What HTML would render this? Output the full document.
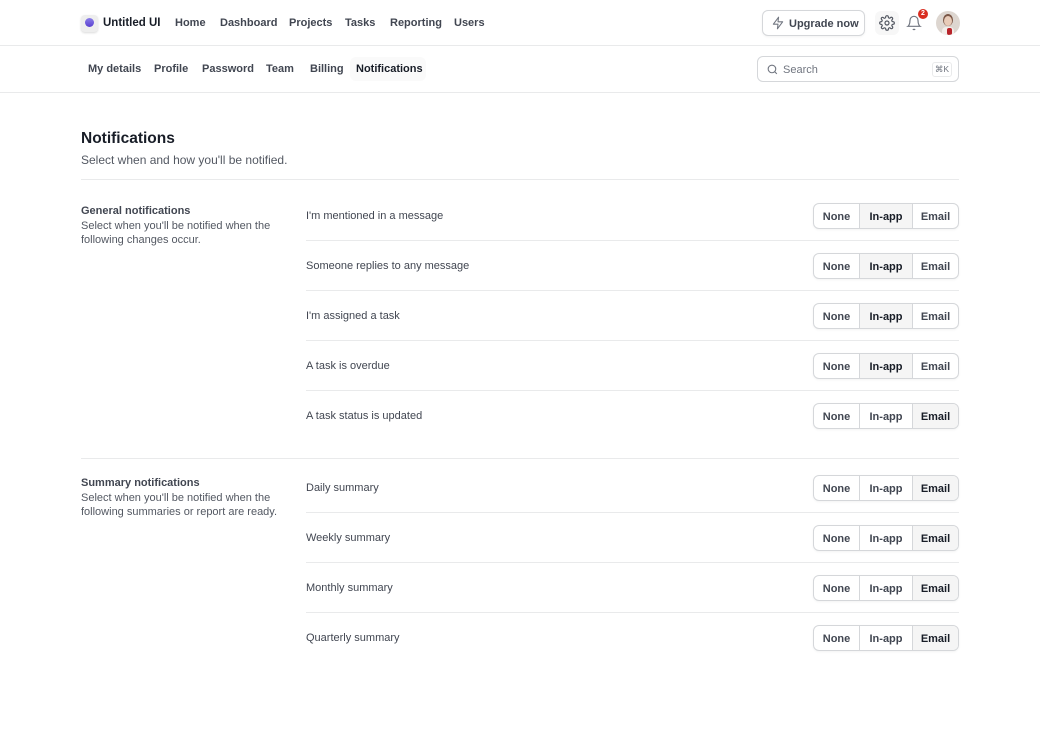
<!DOCTYPE html>
<html><head><meta charset="utf-8"><style>
*{box-sizing:border-box;margin:0;padding:0}
body{width:1040px;height:732px;background:#fff;font-family:"Liberation Sans",sans-serif;color:#181d27;position:relative;overflow:hidden}
.abs{position:absolute}
.hdr{left:0;top:0;width:1040px;height:46px;border-bottom:1px solid #e9eaeb}
.nav a{position:absolute;top:17px;font-size:11px;font-weight:600;color:#414651;text-decoration:none}
.sub{top:46px;left:0;width:1040px;height:47px;border-bottom:1px solid #e9eaeb}
.tab{position:absolute;top:17px;font-size:11px;font-weight:600;color:#414651}
.row{position:absolute;left:306px;width:653px;height:50px;border-bottom:1px solid #e9eaeb}
.row span{position:absolute;left:0;top:19px;font-size:11px;color:#414651}
.grp{position:absolute;right:0;top:12px;width:146px;height:26px;border:1px solid #d5d7da;border-radius:6px;display:flex;overflow:hidden;box-shadow:0 1px 2px rgba(10,13,18,.05)}
.grp div{font-size:11px;font-weight:600;color:#414651;display:flex;align-items:center;justify-content:center;height:100%;padding-top:1px}
.grp .n{width:46px;border-right:1px solid #d5d7da}
.grp .i{width:53px;border-right:1px solid #d5d7da}
.grp .e{flex:1}
.grp .on{background:#f5f5f5;color:#181d27}
.sec{position:absolute;left:81px;font-size:11px;color:#535862;line-height:14.5px}
.sec b{color:#414651;font-weight:600;display:block}
</style></head><body>
<div class="abs hdr">
 <div class="abs" style="left:81px;top:15px;width:17px;height:17px;border-radius:4px;background:#eee;box-shadow:0 1px 2px rgba(0,0,0,.15)"><div style="position:absolute;left:4px;top:3px;width:9px;height:9px;border-radius:50%;background:linear-gradient(#8b7ee8,#5a40d0)"></div></div>
 <div class="abs" style="left:103px;top:17px;font-size:11.5px;font-weight:700">Untitled UI</div>
 <div class="nav"><a style="left:175px">Home</a><a style="left:220px">Dashboard</a><a style="left:289px">Projects</a><a style="left:345px">Tasks</a><a style="left:390px">Reporting</a><a style="left:454px">Users</a></div>
 <div class="abs" style="left:762px;top:10px;width:103px;height:26px;border:1px solid #d5d7da;border-radius:6px;box-shadow:0 1px 2px rgba(0,0,0,.05)">
  <svg class="abs" style="left:8px;top:5px" width="14" height="14" viewBox="0 0 24 24" fill="none" stroke="#717680" stroke-width="1.8" stroke-linejoin="round"><path d="M13 2L4 14h8l-1 8 9-12h-8l1-8z"/></svg>
  <span class="abs" style="left:26px;top:7px;font-size:11px;font-weight:600;color:#414651">Upgrade now</span></div>
 <div class="abs" style="left:875px;top:11px;width:24px;height:24px;border-radius:6px;background:#f7f7f7"></div>
 <svg class="abs" style="left:879px;top:15px" width="16" height="16" viewBox="0 0 24 24" fill="none" stroke="#535862" stroke-width="1.8"><circle cx="12" cy="12" r="3"/><path d="M19.4 15a1.7 1.7 0 0 0 .3 1.8l.1.1a2 2 0 1 1-2.8 2.8l-.1-.1a1.7 1.7 0 0 0-1.8-.3 1.7 1.7 0 0 0-1 1.5V21a2 2 0 1 1-4 0v-.1a1.7 1.7 0 0 0-1.1-1.5 1.7 1.7 0 0 0-1.8.3l-.1.1a2 2 0 1 1-2.8-2.8l.1-.1a1.7 1.7 0 0 0 .3-1.800 1.7 1.7 0 0 0-1.5-1H3a2 2 0 1 1 0-4h.1a1.7 1.7 0 0 0 1.5-1.1 1.7 1.7 0 0 0-.3-1.8l-.1-.1a2 2 0 1 1 2.8-2.8l.1.1a1.7 1.7 0 0 0 1.8.3H9a1.7 1.7 0 0 0 1-1.5V3a2 2 0 1 1 4 0v.1a1.7 1.7 0 0 0 1 1.5 1.7 1.7 0 0 0 1.8-.3l.1-.1a2 2 0 1 1 2.8 2.8l-.1.1a1.7 1.7 0 0 0-.3 1.8V9a1.7 1.7 0 0 0 1.5 1H21a2 2 0 1 1 0 4h-.1a1.7 1.7 0 0 0-1.5 1z"/></svg>
 <svg class="abs" style="left:906px;top:15px" width="16" height="16" viewBox="0 0 24 24" fill="none" stroke="#717680" stroke-width="1.8"><path d="M18 8a6 6 0 0 0-12 0c0 7-3 9-3 9h18s-3-2-3-9M13.7 21a2 2 0 0 1-3.4 0"/></svg>
 <div class="abs" style="left:918px;top:9px;width:10px;height:10px;border-radius:50%;background:#d92d20;color:#fff;font-size:7px;font-weight:700;text-align:center;line-height:10px">2</div>
 <div class="abs" style="left:936px;top:11px;width:24px;height:24px;border-radius:50%;background:#ddd6d0;overflow:hidden">
  <div style="position:absolute;left:7px;top:3px;width:10px;height:12px;border-radius:50%;background:#7a5646"></div>
  <div style="position:absolute;left:8px;top:5px;width:8px;height:10px;border-radius:50%;background:#e8cbb8"></div>
  <div style="position:absolute;left:6px;top:16px;width:12px;height:9px;border-radius:4px 4px 0 0;background:#f2eeea"></div>
  <div style="position:absolute;left:11px;top:17px;width:5px;height:7px;background:#b8232a;border-radius:2px"></div></div>
</div>
<div class="abs sub">
 <div class="abs" style="left:350px;top:11px;width:76px;height:24px;background:#fafafa;border-radius:6px"></div>
 <div class="tab" style="left:88px">My details</div><div class="tab" style="left:154px">Profile</div><div class="tab" style="left:202px">Password</div><div class="tab" style="left:266px">Team</div><div class="tab" style="left:310px">Billing</div><div class="tab" style="left:356px;color:#181d27">Notifications</div>
 <div class="abs" style="left:757px;top:10px;width:202px;height:26px;border:1px solid #d5d7da;border-radius:6px">
  <svg class="abs" style="left:8px;top:6px" width="13" height="13" viewBox="0 0 24 24" fill="none" stroke="#717680" stroke-width="2"><circle cx="11" cy="11" r="7"/><path d="M20 20l-4-4"/></svg>
  <span class="abs" style="left:25px;top:7px;font-size:11px;color:#717680">Search</span>
  <span class="abs" style="right:6px;top:5px;font-size:8.5px;color:#717680;border:1px solid #e9eaeb;border-radius:3px;padding:1px 2px">⌘K</span></div>
</div>
<div class="abs" style="left:81px;top:130px;font-size:15.5px;font-weight:600">Notifications</div>
<div class="abs" style="left:81px;top:153px;font-size:12px;color:#535862">Select when and how you'll be notified.</div>
<div class="abs" style="left:81px;top:179px;width:878px;height:1px;background:#e9eaeb"></div>
<div class="sec" style="top:204px"><b>General notifications</b>Select when you'll be notified when the<br>following changes occur.</div>
<div class="sec" style="top:476px"><b>Summary notifications</b>Select when you'll be notified when the<br>following summaries or report are ready.</div>
<div class="row" style="top:191px"><span>I'm mentioned in a message</span><div class="grp"><div class="n">None</div><div class="i on">In-app</div><div class="e">Email</div></div></div>
<div class="row" style="top:241px"><span>Someone replies to any message</span><div class="grp"><div class="n">None</div><div class="i on">In-app</div><div class="e">Email</div></div></div>
<div class="row" style="top:291px"><span>I'm assigned a task</span><div class="grp"><div class="n">None</div><div class="i on">In-app</div><div class="e">Email</div></div></div>
<div class="row" style="top:341px"><span>A task is overdue</span><div class="grp"><div class="n">None</div><div class="i on">In-app</div><div class="e">Email</div></div></div>
<div class="row" style="top:391px;border:none"><span>A task status is updated</span><div class="grp"><div class="n">None</div><div class="i">In-app</div><div class="e on">Email</div></div></div>
<div class="abs" style="left:81px;top:458px;width:878px;height:1px;background:#e9eaeb"></div>
<div class="row" style="top:463px"><span>Daily summary</span><div class="grp"><div class="n">None</div><div class="i">In-app</div><div class="e on">Email</div></div></div>
<div class="row" style="top:513px"><span>Weekly summary</span><div class="grp"><div class="n">None</div><div class="i">In-app</div><div class="e on">Email</div></div></div>
<div class="row" style="top:563px"><span>Monthly summary</span><div class="grp"><div class="n">None</div><div class="i">In-app</div><div class="e on">Email</div></div></div>
<div class="row" style="top:613px;border:none"><span>Quarterly summary</span><div class="grp"><div class="n">None</div><div class="i">In-app</div><div class="e on">Email</div></div></div>
</body></html>
